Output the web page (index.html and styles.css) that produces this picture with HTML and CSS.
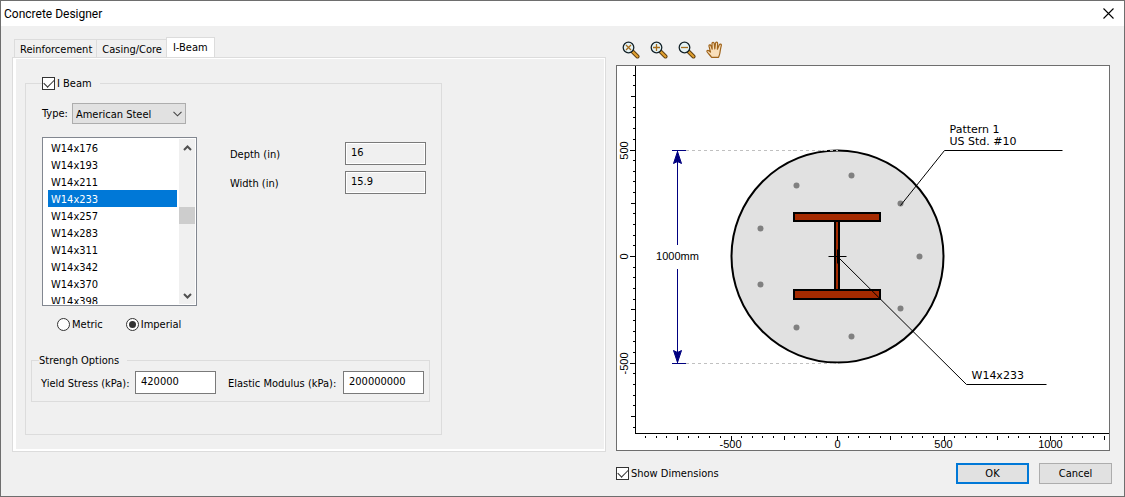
FILE: index.html
```html
<!DOCTYPE html>
<html lang="en">
<head>
<meta charset="utf-8">
<title>Concrete Designer</title>
<link rel="stylesheet" href="styles.css">
</head>
<body>
<div class="window">
  <header class="titlebar">
    <h1 class="title">Concrete Designer</h1>
    <button class="close" type="button" aria-label="Close">
      <svg width="11" height="11" viewBox="0 0 11 11"><path d="M.5.5l10 10M10.5.5l-10 10" fill="none" stroke="#000" stroke-width="1.1"/></svg>
    </button>
  </header>
  <main class="content">
    <section class="editor">
      <div class="tabs" role="tablist">
        <button class="tab" type="button" role="tab">Reinforcement</button>
        <button class="tab" type="button" role="tab">Casing/Core</button>
        <button class="tab tab-active" type="button" role="tab" aria-selected="true">I-Beam</button>
      </div>
      <div class="panel" role="tabpanel">
        <fieldset class="group beam">
          <legend class="legend"><label class="choice"><input class="check" type="checkbox" checked>I Beam</label></legend>
          <div class="type-row">
            <label for="type">Type:</label>
            <span class="combo">
              <select id="type" class="combo-select"><option>American Steel</option></select>
              <svg class="combo-arrow" width="9" height="6" viewBox="0 0 9 6"><path d="M.5.8l4 4 4-4" fill="none" stroke="#444" stroke-width="1.1"/></svg>
            </span>
          </div>
          <div class="section-row">
            <div class="listbox">
              <ul class="options" role="listbox" aria-label="Section">
                <li class="option" role="option">W14x176</li>
                <li class="option" role="option">W14x193</li>
                <li class="option" role="option">W14x211</li>
                <li class="option option-selected" role="option" aria-selected="true">W14x233</li>
                <li class="option" role="option">W14x257</li>
                <li class="option" role="option">W14x283</li>
                <li class="option" role="option">W14x311</li>
                <li class="option" role="option">W14x342</li>
                <li class="option" role="option">W14x370</li>
                <li class="option" role="option">W14x398</li>
              </ul>
              <div class="scrollbar">
                <button class="scroll-button" type="button" aria-label="Scroll up"><svg width="9" height="6" viewBox="0 0 9 6"><path d="M1 5l3.500-3.500L8 5" fill="none" stroke="#505050" stroke-width="2"/></svg></button>
                <div class="track"><div class="thumb"></div></div>
                <button class="scroll-button" type="button" aria-label="Scroll down"><svg width="9" height="6" viewBox="0 0 9 6"><path d="M1 1l3.500 3.500L8 1" fill="none" stroke="#505050" stroke-width="2"/></svg></button>
              </div>
            </div>
            <div class="size-fields">
              <label for="depth">Depth (in)</label>
              <input id="depth" class="field field-readonly" type="text" value="16" readonly>
              <label for="width">Width (in)</label>
              <input id="width" class="field field-readonly" type="text" value="15.9" readonly>
            </div>
          </div>
          <div class="units">
            <label class="choice unit"><input class="radio" type="radio" name="units">Metric</label>
            <label class="choice unit"><input class="radio" type="radio" name="units" checked>Imperial</label>
          </div>
          <fieldset class="group strength">
            <legend class="legend strength-legend">Strengh Options</legend>
            <div class="strength-row">
              <label class="yield-label" for="yield">Yield Stress (kPa):</label>
              <input id="yield" class="field" type="text" value="420000">
              <label class="modulus-label" for="modulus">Elastic Modulus (kPa):</label>
              <input id="modulus" class="field" type="text" value="200000000">
            </div>
          </fieldset>
        </fieldset>
      </div>
    </section>
    <section class="preview">
      <div class="toolbar">
        <button class="tool" type="button" aria-label="Zoom extents">
          <svg width="18" height="18" viewBox="0 0 18 18"><path d="M10.500 10.500l5 5" stroke="#5c3c10" stroke-width="4" stroke-linecap="round"/><path d="M11 11l4.500 4.500" stroke="#e0a030" stroke-width="2.200" stroke-linecap="round"/><circle cx="6.500" cy="6.500" r="5.300" fill="#e4f2f4" stroke="#15232a" stroke-width="1.300"/><path d="M4 4l5 5M9 4l-5 5" stroke="#a86e1c" stroke-width="1.300"/></svg>
        </button>
        <button class="tool" type="button" aria-label="Zoom in">
          <svg width="18" height="18" viewBox="0 0 18 18"><path d="M10.500 10.500l5 5" stroke="#5c3c10" stroke-width="4" stroke-linecap="round"/><path d="M11 11l4.500 4.500" stroke="#e0a030" stroke-width="2.200" stroke-linecap="round"/><circle cx="6.500" cy="6.500" r="5.300" fill="#e4f2f4" stroke="#15232a" stroke-width="1.300"/><path d="M3 6.500h7M6.500 3v7" stroke="#a86e1c" stroke-width="1.300"/></svg>
        </button>
        <button class="tool" type="button" aria-label="Zoom out">
          <svg width="18" height="18" viewBox="0 0 18 18"><path d="M10.500 10.500l5 5" stroke="#5c3c10" stroke-width="4" stroke-linecap="round"/><path d="M11 11l4.500 4.500" stroke="#e0a030" stroke-width="2.200" stroke-linecap="round"/><circle cx="6.500" cy="6.500" r="5.300" fill="#e4f2f4" stroke="#15232a" stroke-width="1.300"/><path d="M3 6.500h7" stroke="#a86e1c" stroke-width="1.300"/></svg>
        </button>
        <button class="tool" type="button" aria-label="Pan">
          <svg width="18" height="18" viewBox="0 0 18 18"><path d="M5.500 16.300C4.500 14.500 2.500 12.800 1.200 11c-.8-1.300.6-2.100 1.600-1.300l1.700 1.400L3 5.200c-.3-1.500 1.500-1.900 2-.5l1.200 3.500L6 2.600c0-1.600 2-1.700 2.200-.1L8.800 8l.7-5.800c.2-1.500 2.200-1.300 2.100.2L11.400 8.200l1.900-4.400c.6-1.400 2.400-.7 2 .8-.9 3.200-1 5-1.400 7.400-.3 1.800-.9 2.900-1.400 4.300z" fill="#f9dfba" stroke="#a0651c" stroke-width="1.200" stroke-linejoin="round"/></svg>
        </button>
      </div>
      <svg class="drawing" viewBox="-220.500 -190.500 492 384" role="img" aria-label="Pile cross section">
        <g class="axes">
          <path d="M-202-191V177H272"/>
          <path d="M-205-181h2M-205-171h2M-207-160h4M-205-149h2M-205-139h2M-205-128h2M-205-117h2M-208-106h5M-205-96h2M-205-85h2M-205-75h2M-205-64h2M-207-53h4M-205-43h2M-205-32h2M-205-21h2M-205-11h2M-208 0h5M-205 11h2M-205 21h2M-205 32h2M-205 43h2M-207 53h4M-205 64h2M-205 75h2M-205 85h2M-205 96h2M-208 107h5M-205 117h2M-205 128h2M-205 139h2M-205 149h2M-207 160h4M-205 171h2"/>
          <path d="M-192 179v2M-181 179v2M-171 179v2M-160 179v4M-149 179v2M-139 179v2M-128 179v2M-117 179v2M-106 179v5M-96 179v2M-85 179v2M-75 179v2M-64 179v2M-53 179v4M-43 179v2M-32 179v2M-21 179v2M-11 179v2M0 179v5M11 179v2M21 179v2M32 179v2M43 179v2M53 179v4M64 179v2M75 179v2M85 179v2M96 179v2M107 179v5M117 179v2M128 179v2M139 179v2M149 179v2M160 179v4M171 179v2M181 179v2M192 179v2M203 179v2M213 179v5M224 179v2M235 179v2M245 179v2M256 179v2M267 179v4"/>
        </g>
        <g class="axis-text">
          <text x="-107" y="191">-500</text>
          <text x="0" y="191">0</text>
          <text x="106" y="191">500</text>
          <text x="213" y="191">1000</text>
          <text transform="translate(-210 -106) rotate(-90)">500</text>
          <text transform="translate(-210 0) rotate(-90)">0</text>
          <text transform="translate(-210 107) rotate(-90)">-500</text>
          <text x="-160" y="3">1000mm</text>
        </g>
        <circle class="pile" cx="0" cy="0" r="106"/>
        <path class="guides" d="M-152-106H0M-152 107H0"/>
        <g class="bars">
          <circle cx="82" cy="0" r="3"/><circle cx="63" cy="-53" r="3"/><circle cx="14" cy="-81" r="3"/>
          <circle cx="-41" cy="-71" r="3"/><circle cx="-77" cy="-28" r="3"/><circle cx="-77" cy="28" r="3"/>
          <circle cx="-41" cy="71" r="3"/><circle cx="14" cy="80" r="3"/><circle cx="63" cy="52" r="3"/>
        </g>
        <g class="beam-shape">
          <path d="M-2.500-35.500h4v69h-4zM-43.500-43.500h86v8h-86zM-43.500 33.500h86v9h-86z"/>
        </g>
        <path class="leaders" d="M-9 0H9M0-7V7M1 1L129 128H209M63-51L107-106H225"/>
        <path class="dimension" d="M-166-106h14M-160-106V-12M-166 107h14M-160 12V107"/>
        <path class="arrowheads" d="M-160-105l4 12-4-2-4 2zM-160 106l4-12-4 2-4-2z"/>
        <g class="notes">
          <text x="112" y="-124">Pattern 1</text>
          <text x="112" y="-112">US Std. #10</text>
          <text x="134" y="122">W14x233</text>
        </g>
      </svg>
      <footer class="actions">
        <label class="choice show"><input class="check" type="checkbox" checked>Show Dimensions</label>
        <button class="push push-default" type="button">OK</button>
        <button class="push" type="button">Cancel</button>
      </footer>
    </section>
  </main>
</div>
</body>
</html>
```
FILE: styles.css
```css
* { box-sizing: border-box; }

body {
  margin: 0;
  background: #f0f0f0;
  color: #000;
  font: 11px/13px "DejaVu Sans Condensed", "DejaVu Sans", sans-serif;
}

button, input, select { font: inherit; color: inherit; margin: 0; border-radius: 0; }

svg { display: block; }

.window {
  min-height: 100vh;
  border: 1px solid #6e6e6e;
}

.titlebar {
  display: flex;
  align-items: center;
  justify-content: space-between;
  height: 25px;
  padding: 0 10px 0 3px;
  background: #fff;
}

.title {
  margin: 0;
  font: 12px/16px Roboto, "Noto Sans", sans-serif;
}

.close { padding: 0; border: 0; background: none; }

.content {
  display: grid;
  grid-template-columns: 594fr 496fr;
  gap: 10px;
  align-items: start;
  padding: 11px 12px 12px 11px;
}

.tabs {
  display: flex;
  align-items: flex-end;
  height: 20px;
  padding-left: 2px;
}

.tab {
  height: 18px;
  padding: 2px 4px 0 5px;
  border: 1px solid #dcdcdc;
  border-width: 1px 0 0 1px;
  background: #f0f0f0;
  white-space: nowrap;
}

.tab-active {
  height: 20px;
  padding: 0 6px;
  border-right-width: 1px;
  background: #fff;
}

.panel {
  padding: 19px 9px 16px 12px;
  border: 1px solid #dcdcdc;
  box-shadow: inset 3px 1px #fff, inset -1px -2px #fff;
}

.group {
  min-width: 0;
  margin: 0;
  border: 1px solid #dcdcdc;
}

.legend { padding: 0; }

.beam {
  max-width: 417px;
  padding: 13px 11px 32px 5px;
}

.beam > .legend { margin-left: 11px; padding-right: 8px; }

.choice { display: flex; align-items: center; gap: 2px; }

.check, .radio {
  appearance: none;
  display: grid;
  place-items: center;
  flex: none;
  width: 13px;
  height: 13px;
  border: 1px solid #333;
  background: #fff;
}

.check:checked::before {
  content: "";
  width: 9px;
  height: 5px;
  margin-bottom: 3px;
  border: solid #333;
  border-width: 0 0 1px 1px;
  transform: rotate(-45deg);
}

.radio { border-radius: 50%; }

.radio:checked::before {
  content: "";
  width: 7px;
  height: 7px;
  border-radius: 50%;
  background: #333;
}

.type-row {
  display: flex;
  align-items: center;
  gap: 4px;
  margin-left: 11px;
}

.combo { position: relative; }

.combo-select {
  appearance: none;
  display: block;
  width: 114px;
  height: 21px;
  padding: 1px 16px 0 3px;
  border: 1px solid #adadad;
  background: #e1e1e1;
}

.combo-arrow {
  position: absolute;
  right: 4px;
  top: 8px;
  pointer-events: none;
}

.section-row {
  display: flex;
  gap: 33px;
  margin: 13px 0 0 11px;
}

.listbox {
  display: flex;
  gap: 2px;
  width: 155px;
  height: 169px;
  padding: 1px 1px 1px 5px;
  border: 1px solid #828790;
  background: #fff;
}

.options {
  flex: 1;
  margin: 0;
  padding: 0;
  overflow: hidden;
  list-style: none;
}

.option { padding: 3px 3px 1px; line-height: 13px; }

.option-selected { background: #0078d7; color: #fff; }

.scrollbar {
  display: flex;
  flex-direction: column;
  width: 16px;
  background: #f0f0f0;
}

.scroll-button {
  display: grid;
  place-items: center;
  height: 17px;
  padding: 0;
  border: 0;
  background: none;
}

.track { flex: 1; padding-top: 51px; }

.thumb { height: 17px; background: #cdcdcd; }

.size-fields {
  display: grid;
  grid-template-columns: 115px auto;
  gap: 6px 0;
  align-items: center;
  align-content: start;
  padding-top: 5px;
}

.size-fields label { padding-top: 1px; }

.field {
  width: 81px;
  height: 23px;
  padding: 0 5px 2px;
  border: 1px solid #7a7a7a;
  background: #fff;
}

.field-readonly { background: #f0f0f0; box-shadow: inset 0 0 0 1px #fff; }

.units { display: flex; gap: 23px; margin: 12px 0 0 26px; }

.strength {
  margin-top: 23px;
  padding: 4px 5px 7px 9px;
}

.strength > .legend { margin-left: -2px; padding-right: 8px; }

.strength-row { display: flex; align-items: center; }

.yield-label { width: 94px; padding-top: 1px; white-space: nowrap; }

.modulus-label { flex: 1; margin-left: 12px; padding-top: 1px; white-space: nowrap; }

.toolbar {
  display: flex;
  gap: 10px;
  height: 28px;
  padding: 4px 0 0 6px;
}

.tool { width: 18px; height: 18px; padding: 0; border: 0; background: none; }

.drawing {
  width: calc(100% - 2px);
  height: auto;
  border: 1px solid #6e6e6e;
  background: #fff;
}

.axes, .guides, .dimension, .leaders {
  fill: none;
  stroke: #000;
  stroke-width: 1px;
}

.axes, .guides, .dimension, .beam-shape { shape-rendering: crispEdges; }

.axis-text {
  font: 11px "Liberation Sans", Arial, sans-serif;
  text-anchor: middle;
}

.notes { font: 11px "DejaVu Sans", Verdana, sans-serif; }

.pile { fill: #e1e1e1; stroke: #000; stroke-width: 2px; }

.guides { stroke: #c0c0c0; stroke-dasharray: 3 3; }

.bars { fill: #808080; }

.beam-shape { fill: #a52a00; stroke: #000; stroke-width: 2px; }

.dimension { stroke: #000080; }

.arrowheads { fill: #000080; stroke: #000080; }

.actions {
  display: flex;
  align-items: center;
  gap: 10px;
  margin-top: 12px;
}

.show { flex: 1; }

.push {
  width: 73px;
  height: 21px;
  padding: 0;
  border: 1px solid #adadad;
  background: #e1e1e1;
}

.push-default { border: 2px solid #0078d7; }
```
